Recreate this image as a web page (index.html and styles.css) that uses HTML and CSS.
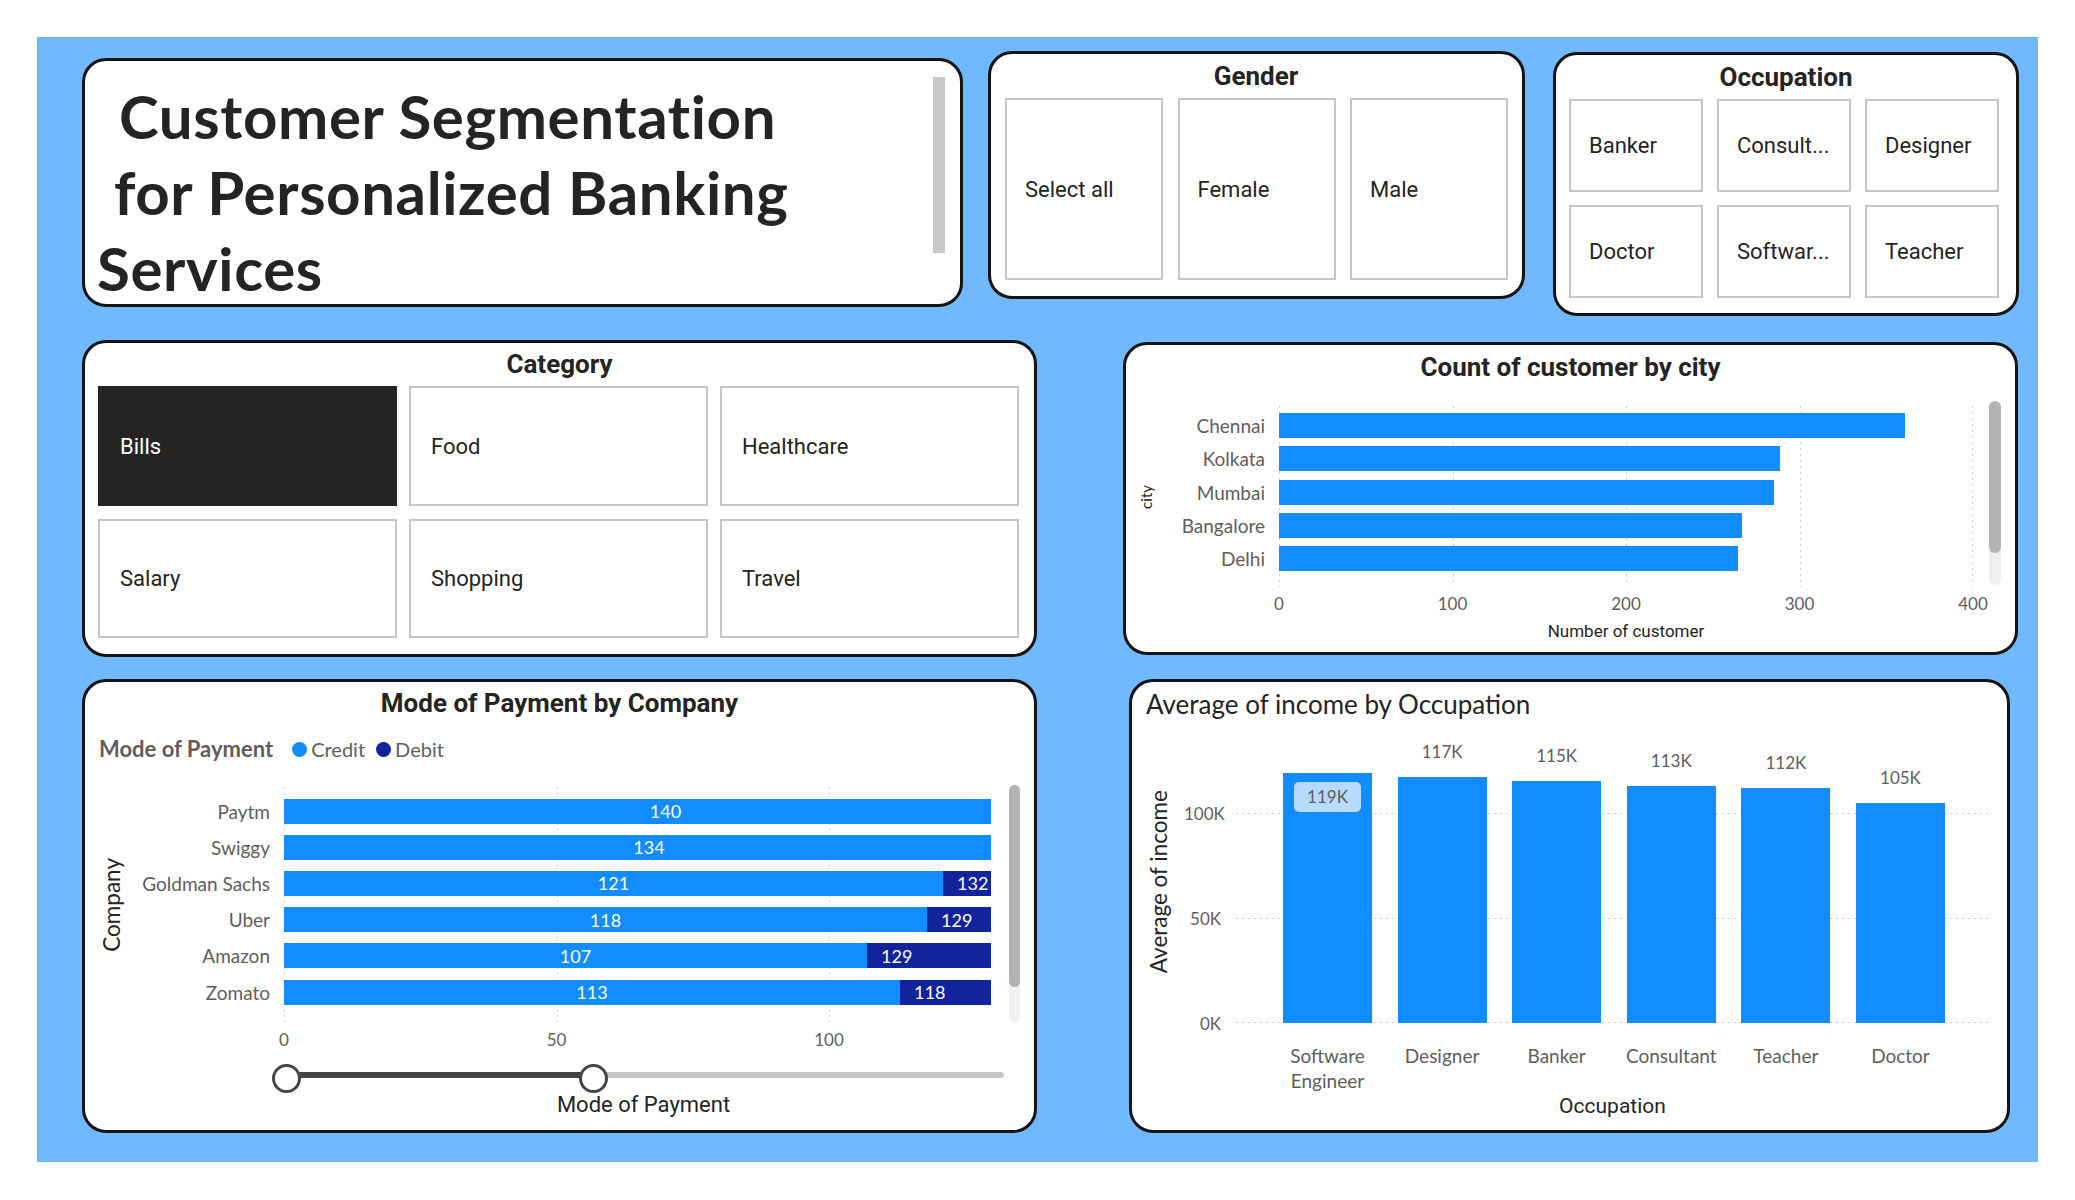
FILE: index.html
```html
<!DOCTYPE html>
<html lang="en">
<head>
    <meta charset="UTF-8">
    <meta name="viewport" content="width=device-width, initial-scale=1.0">
    <title>Customer Segmentation</title>
    <link rel="stylesheet" href="styles.css">
</head>
<body>
    <div class="canvas">
        <div class="row">
            <div class="card title-card">
                <h1 class="title-text">
                    <span class="line line1">Customer Segmentation</span>
                    <span class="line line2">for Personalized Banking</span>
                    <span class="line line3">Services</span>
                </h1>
                <div class="text-scroll"></div>
            </div>

            <div class="card slicer gender">
                <h3 class="slicer-title">Gender</h3>
                <div class="tiles gender-tiles">
                    <div class="tile">Select all</div>
                    <div class="tile">Female</div>
                    <div class="tile">Male</div>
                </div>
            </div>

            <div class="card slicer occupation">
                <h3 class="slicer-title">Occupation</h3>
                <div class="tiles occ-tiles">
                    <div class="tile">Banker</div>
                    <div class="tile">Consult...</div>
                    <div class="tile">Designer</div>
                    <div class="tile">Doctor</div>
                    <div class="tile">Softwar...</div>
                    <div class="tile">Teacher</div>
                </div>
            </div>
        </div>

        <div class="row">
            <div class="card slicer category">
                <h3 class="slicer-title">Category</h3>
                <div class="tiles cat-tiles">
                    <div class="tile active">Bills</div>
                    <div class="tile">Food</div>
                    <div class="tile">Healthcare</div>
                    <div class="tile">Salary</div>
                    <div class="tile">Shopping</div>
                    <div class="tile">Travel</div>
                </div>
            </div>

            <div class="card city">
                <h3 class="chart-title">Count of customer by city</h3>
                <div class="city-body">
                    <div class="ytitle"><span class="city-ytitle">city</span></div>
                    <div class="city-labels">
                        <span>Chennai</span>
                        <span>Kolkata</span>
                        <span>Mumbai</span>
                        <span>Bangalore</span>
                        <span>Delhi</span>
                    </div>
                    <div class="city-plot">
                        <div class="bar-row"><div class="bar" style="width:626px"></div></div>
                        <div class="bar-row"><div class="bar" style="width:501px"></div></div>
                        <div class="bar-row"><div class="bar" style="width:495px"></div></div>
                        <div class="bar-row"><div class="bar" style="width:463px"></div></div>
                        <div class="bar-row"><div class="bar" style="width:459px"></div></div>
                    </div>
                    <div class="vscroll city-scroll"><div class="thumb"></div></div>
                    <div class="x-ticks city-ticks">
                        <span>0</span><span>100</span><span>200</span><span>300</span><span>400</span>
                    </div>
                    <div class="axis-title city-axis">Number of customer</div>
                </div>
            </div>
        </div>

        <div class="row">
            <div class="card mode">
                <h3 class="chart-title">Mode of Payment by Company</h3>
                <div class="legend">
                    <span class="legend-title">Mode of Payment</span>
                    <span class="legend-item"><i class="dot credit"></i>Credit</span>
                    <span class="legend-item"><i class="dot debit"></i>Debit</span>
                </div>
                <div class="mode-body">
                    <div class="ytitle"><span class="big-ytitle">Company</span></div>
                    <div class="mode-labels">
                        <span>Paytm</span>
                        <span>Swiggy</span>
                        <span>Goldman Sachs</span>
                        <span>Uber</span>
                        <span>Amazon</span>
                        <span>Zomato</span>
                    </div>
                    <div class="mode-plot">
                        <div class="stack-row"><div class="track">
                            <div class="seg credit" style="width:763px">140</div>
                        </div></div>
                        <div class="stack-row"><div class="track">
                            <div class="seg credit" style="width:730px">134</div>
                        </div></div>
                        <div class="stack-row"><div class="track">
                            <div class="seg credit" style="width:659px">121</div>
                            <div class="seg debit" style="width:719px">132</div>
                        </div></div>
                        <div class="stack-row"><div class="track">
                            <div class="seg credit" style="width:643px">118</div>
                            <div class="seg debit" style="width:703px">129</div>
                        </div></div>
                        <div class="stack-row"><div class="track">
                            <div class="seg credit" style="width:583px">107</div>
                            <div class="seg debit" style="width:703px">129</div>
                        </div></div>
                        <div class="stack-row"><div class="track">
                            <div class="seg credit" style="width:616px">113</div>
                            <div class="seg debit" style="width:643px">118</div>
                        </div></div>
                    </div>
                    <div class="vscroll mode-scroll"><div class="thumb"></div></div>
                    <div class="x-ticks mode-ticks">
                        <span>0</span><span>50</span><span>100</span>
                    </div>
                    <div class="slider">
                        <div class="slider-fill"></div>
                    </div>
                    <div class="slider-label">Mode of Payment</div>
                </div>
            </div>

            <div class="card income">
                <h3 class="income-title">Average of income by Occupation</h3>
                <div class="income-body">
                    <div class="ytitle"><span class="big-ytitle">Average of income</span></div>
                    <div class="y-ticks">
                        <span>100K</span>
                        <span>50K</span>
                        <span>0K</span>
                    </div>
                    <div class="cols">
                        <div class="col">
                            <div class="col-bar" style="height:250px"><span class="inside-label">119K</span></div>
                        </div>
                        <div class="col">
                            <span class="col-val">117K</span>
                            <div class="col-bar" style="height:246px"></div>
                        </div>
                        <div class="col">
                            <span class="col-val">115K</span>
                            <div class="col-bar" style="height:242px"></div>
                        </div>
                        <div class="col">
                            <span class="col-val">113K</span>
                            <div class="col-bar" style="height:237px"></div>
                        </div>
                        <div class="col">
                            <span class="col-val">112K</span>
                            <div class="col-bar" style="height:235px"></div>
                        </div>
                        <div class="col">
                            <span class="col-val">105K</span>
                            <div class="col-bar" style="height:220px"></div>
                        </div>
                    </div>
                    <div class="x-labels">
                        <span>Software Engineer</span>
                        <span>Designer</span>
                        <span>Banker</span>
                        <span>Consultant</span>
                        <span>Teacher</span>
                        <span>Doctor</span>
                    </div>
                    <div class="axis-title income-axis">Occupation</div>
                </div>
            </div>
        </div>
    </div>
</body>
</html>
```

FILE: styles.css
```css
*{
    margin: 0;
    padding: 0;
    box-sizing: border-box;
}
body{
    background: #fff;
    font-family: Lato, "Open Sans", sans-serif;
    color: #252423;
}
.canvas{
    margin: 37px 0 0 37px;
    width: 2001px;
    height: 1125px;
    background: #71b9fe;
    display: flex;
    flex-direction: column;
}
.row{
    display: flex;
    align-items: flex-start;
}
.card{
    background: #fff;
    border: 3px solid #141414;
    border-radius: 24px;
}

/* title text box */
.title-card{
    margin: 21px 0 0 45px;
    width: 881px;
    height: 249px;
    display: flex;
    overflow: hidden;
}
.title-text{
    flex: 1;
    padding: 17px 0 0 12px;
    font-family: Lato, sans-serif;
    font-weight: 700;
    font-size: 60px;
    letter-spacing: 0.6px;
    line-height: 76px;
    color: #252423;
}
.line{
    display: block;
    white-space: nowrap;
}
.line1{
    padding-left: 22px;
}
.line2{
    padding-left: 17px;
}
.text-scroll{
    flex-shrink: 0;
    width: 12px;
    height: 176px;
    margin: 16px 15px 0 0;
    background: #c8c8c8;
}

/* slicers */
.slicer-title{
    font-family: Roboto, sans-serif;
    font-weight: 700;
    font-size: 26px;
    line-height: 30px;
    text-align: center;
}
.tiles{
    display: grid;
    margin-top: 7px;
}
.tile{
    border: 2px solid #c8c6c4;
    display: flex;
    align-items: center;
    padding: 0 10px 0 18px;
    font-family: Roboto, sans-serif;
    font-size: 22px;
    white-space: nowrap;
    overflow: hidden;
}
.tile.active{
    background: #252423;
    border-color: #252423;
    color: #fff;
}
.gender{
    margin: 14px 0 0 25px;
    width: 537px;
    height: 248px;
    padding: 7px 15px 0 14px;
}
.gender-tiles{
    grid-template-columns: repeat(3, 158px);
    column-gap: 14.5px;
    height: 182px;
}
.occupation{
    margin: 15px 0 0 28px;
    width: 466px;
    height: 264px;
    padding: 7px 13px 0;
}
.occ-tiles{
    grid-template-columns: repeat(3, 134px);
    grid-template-rows: 93px 93px;
    gap: 13px 14px;
}
.category{
    margin: 24px 0 0 45px;
    width: 955px;
    height: 317px;
    padding: 6px 13px 0;
}
.cat-tiles{
    grid-template-columns: repeat(3, 299px);
    grid-template-rows: 120px 119px;
    gap: 13px 12px;
}
.cat-tiles .tile{
    padding-left: 20px;
}

/* shared chart bits */
.chart-title{
    font-family: Roboto, sans-serif;
    font-weight: 700;
    font-size: 26px;
    line-height: 30px;
    text-align: center;
}
.ytitle{
    grid-column: 1;
    grid-row: 1;
    display: flex;
    align-items: center;
    justify-content: center;
}
.ytitle span{
    writing-mode: vertical-rl;
    transform: rotate(180deg);
    white-space: nowrap;
    color: #252423;
}
.city-ytitle{
    font-size: 15px;
}
.big-ytitle{
    font-size: 22.5px;
}
.x-ticks{
    grid-row: 2;
    grid-column: 3;
    display: flex;
    font-size: 17px;
    line-height: 20px;
    color: #605e5c;
}
.x-ticks span{
    flex-shrink: 0;
    text-align: center;
}
.axis-title{
    font-family: Roboto, sans-serif;
    text-align: center;
    color: #252423;
}
.vscroll{
    grid-row: 1;
    grid-column: 5;
    background: #f0f0f0;
    border-radius: 6px;
}
.vscroll .thumb{
    background: #b3b3b3;
    border-radius: 6px;
}

/* count by city */
.city{
    margin: 26px 0 0 86px;
    width: 895px;
    height: 313px;
    padding-top: 7px;
}
.city-body{
    display: grid;
    grid-template-columns: 40px 113px 694px 16px 12px;
    grid-template-rows: 181px auto auto;
    margin-top: 24px;
}
.city-labels{
    grid-column: 2;
    grid-row: 1;
    padding: 3px 14px 0 0;
    display: flex;
    flex-direction: column;
}
.city-labels span{
    height: 33.33px;
    display: flex;
    align-items: center;
    justify-content: flex-end;
    font-size: 19px;
    color: #605e5c;
}
.city-plot{
    grid-column: 3;
    grid-row: 1;
    padding-top: 3px;
    background-image:
        linear-gradient(#d0cfcd 2px, transparent 2px),
        linear-gradient(#d0cfcd 2px, transparent 2px),
        linear-gradient(#d0cfcd 2px, transparent 2px),
        linear-gradient(#d0cfcd 2px, transparent 2px),
        linear-gradient(#d0cfcd 2px, transparent 2px);
    background-size: 1px 6px;
    background-repeat: repeat-y;
    background-position: 0 0, 173.5px 0, 347px 0, 520.5px 0, 693px 0;
}
.bar-row{
    height: 33.33px;
    display: flex;
    align-items: center;
}
.bar{
    height: 25px;
    background: #118dff;
}
.city-scroll{
    margin-top: -5px;
    height: 184px;
}
.city-scroll .thumb{
    height: 152px;
}
.city-ticks{
    margin: 7px 0 0 -86.75px;
}
.city-ticks span{
    width: 173.5px;
}
.city-axis{
    grid-row: 3;
    grid-column: 3;
    margin-top: 7px;
    font-size: 17px;
    line-height: 20px;
}

/* mode of payment */
.mode{
    margin: 22px 0 0 45px;
    width: 955px;
    height: 454px;
    padding-top: 6px;
}
.legend{
    display: flex;
    align-items: center;
    margin: 21px 0 0 14px;
    font-size: 20px;
    line-height: 20px;
    color: #605e5c;
}
.legend-title{
    font-weight: 700;
    font-size: 22px;
    margin-right: 19px;
}
.legend-item{
    display: flex;
    align-items: center;
    gap: 4px;
    margin-right: 11px;
}
.dot{
    width: 15px;
    height: 15px;
    border-radius: 50%;
}
.dot.credit{
    background: #118dff;
}
.dot.debit{
    background: #12239e;
}
.mode-body{
    display: grid;
    grid-template-columns: 52px 147px 707px 18px 11px;
    grid-template-rows: 235px auto auto auto;
    margin-top: 28px;
}
.mode-labels{
    grid-column: 2;
    grid-row: 1;
    padding: 6px 14px 0 0;
    display: flex;
    flex-direction: column;
}
.mode-labels span{
    height: 36.2px;
    display: flex;
    align-items: center;
    justify-content: flex-end;
    font-size: 19px;
    color: #605e5c;
}
.mode-plot{
    grid-column: 3;
    grid-row: 1;
    padding-top: 6px;
    background-image:
        linear-gradient(#d0cfcd 2px, transparent 2px),
        linear-gradient(#d0cfcd 2px, transparent 2px),
        linear-gradient(#d0cfcd 2px, transparent 2px);
    background-size: 1px 6px;
    background-repeat: repeat-y;
    background-position: 0 0, 272.5px 0, 545px 0;
}
.stack-row{
    height: 36.2px;
    display: flex;
    align-items: center;
}
.track{
    width: 707px;
    height: 25px;
    display: flex;
    overflow: hidden;
}
.seg{
    flex-shrink: 0;
    height: 25px;
    display: flex;
    align-items: center;
    font-size: 18px;
    color: #fff;
}
.seg.credit{
    background: #118dff;
    justify-content: center;
}
.seg.debit{
    background: #12239e;
    padding-left: 14px;
}
.mode-scroll{
    margin-top: -2px;
    height: 237px;
}
.mode-scroll .thumb{
    height: 202px;
}
.mode-ticks{
    margin: 8px 0 0 -136.25px;
}
.mode-ticks span{
    width: 272.5px;
}
.slider{
    grid-row: 3;
    grid-column: 3 / span 3;
    width: 721px;
    height: 6px;
    margin: 22px 0 0 -1px;
    background: #c8c6c4;
    border-radius: 3px;
}
.slider-fill{
    position: relative;
    width: 313px;
    height: 6px;
    background: #484644;
}
.slider-fill::before,
.slider-fill::after{
    content: "";
    position: absolute;
    top: -8.5px;
    width: 23px;
    height: 23px;
    border: 3px solid #484644;
    border-radius: 50%;
    background: #fff;
}
.slider-fill::before{
    left: -11.5px;
}
.slider-fill::after{
    right: -11.5px;
}
.slider-label{
    grid-row: 4;
    grid-column: 3 / span 3;
    width: 721px;
    margin: 14px 0 0 -1px;
    font-family: Roboto, sans-serif;
    font-size: 22px;
    line-height: 26px;
    text-align: center;
}

/* average income */
.income{
    margin: 22px 0 0 92px;
    width: 881px;
    height: 454px;
    padding: 7px 0 0 14px;
}
.income-title{
    font-weight: 400;
    font-size: 26px;
    line-height: 30px;
}
.income-body{
    display: grid;
    grid-template-columns: 52px 37px 15px 753px;
    grid-template-rows: 283px auto auto;
    margin: 21px 0 0 -14px;
}
.y-ticks{
    grid-column: 2;
    grid-row: 1;
    height: 315px;
    margin-top: 20.5px;
    display: flex;
    flex-direction: column;
}
.y-ticks span{
    height: 105px;
    line-height: 105px;
    text-align: right;
    white-space: nowrap;
    font-size: 17px;
    color: #605e5c;
}
.cols{
    grid-column: 4;
    grid-row: 1;
    display: flex;
    align-items: flex-end;
    padding-left: 34.2px;
    background-image:
        linear-gradient(to right, #d0cfcd 2px, transparent 2px),
        linear-gradient(to right, #d0cfcd 2px, transparent 2px),
        linear-gradient(to right, #d0cfcd 2px, transparent 2px);
    background-size: 6px 1px;
    background-repeat: repeat-x;
    background-position: 0 73px, 0 178px, 0 282px;
}
.col{
    width: 114.6px;
    flex-shrink: 0;
    display: flex;
    flex-direction: column;
    align-items: center;
}
.col-val{
    font-size: 17px;
    line-height: 20px;
    margin-bottom: 15px;
    color: #605e5c;
}
.col-bar{
    width: 89px;
    background: #118dff;
    display: flex;
    justify-content: center;
}
.inside-label{
    margin-top: 9px;
    width: 67px;
    height: 30px;
    line-height: 30px;
    border-radius: 5px;
    background: #b6dbff;
    text-align: center;
    font-size: 17px;
    color: #605e5c;
}
.x-labels{
    grid-column: 4;
    grid-row: 2;
    display: flex;
    padding-left: 34.2px;
    margin-top: 19.5px;
}
.x-labels span{
    width: 114.6px;
    flex-shrink: 0;
    text-align: center;
    font-size: 19px;
    line-height: 25px;
    color: #605e5c;
}
.income-axis{
    grid-column: 4;
    grid-row: 3;
    font-size: 21px;
    line-height: 26px;
}
```
